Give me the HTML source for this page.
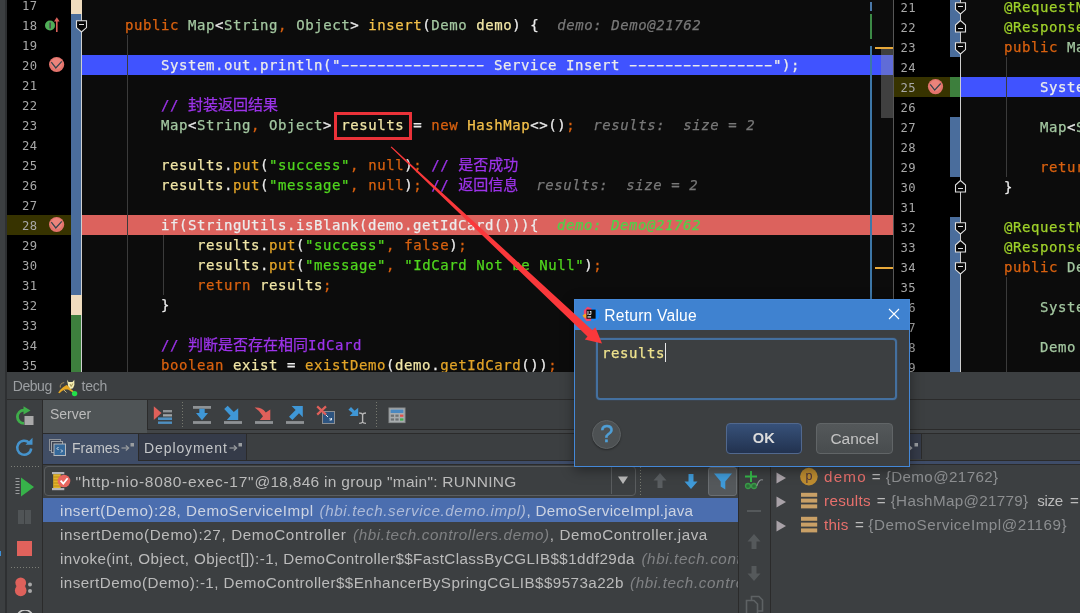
<!DOCTYPE html>
<html><head><meta charset="utf-8"><title>Debug</title>
<style>
*{box-sizing:border-box;margin:0;padding:0}
html,body{width:1080px;height:613px;overflow:hidden;background:#3c3f41}
body{position:relative;font-family:"Liberation Sans","Noto Sans CJK SC",sans-serif}
.abs{position:absolute}
.ed{position:absolute;top:0;height:372px;overflow:hidden;background:#0c0c0c}
.code,.ln,.num{font-family:"DejaVu Sans Mono","Liberation Mono","Noto Sans CJK SC",monospace;font-size:14px;line-height:20px;white-space:pre;letter-spacing:0.572px}
.ln{position:absolute;height:20px;color:#ececec;-webkit-text-stroke:0.25px currentColor}
.num{position:absolute;height:20px;color:#a8a8a8;font-size:12.2px;letter-spacing:.45px}
.k{color:#d9610f}.t{color:#a3c7a0}.s{color:#50d61e}.c{color:#9d33ea}.m{color:#f3c04a}.p{color:#e3a428}.h{color:#787878;font-style:italic}.y{color:#f1e6a6}.a{color:#9fd12a}.hg{color:#4fd14a;font-style:italic}
.dash{display:inline-block;width:144px;letter-spacing:-3.286px;transform:translateX(-3.200px) scaleX(1.75);transform-origin:0 50%}
.cj{font-family:"Noto Sans CJK SC",sans-serif;font-size:15px;letter-spacing:0;line-height:0}
.ui{font-family:"Liberation Sans",sans-serif;color:#bbbbbb}
</style></head><body>
<div id="wrap" style="position:absolute;left:0;top:0;width:1080px;height:613px;overflow:hidden;will-change:transform">
<div class="ed" id="L" style="left:0;width:893px">
<div class="abs" style="left:0;top:0;width:7px;height:372px;background:#3c3f41"></div>
<div class="abs" style="left:5px;top:0;width:2px;height:372px;background:#2e3032"></div>
<div class="abs" style="left:7px;top:0;width:64px;height:372px;background:#000"></div>
<div class="abs" style="left:7px;top:215px;width:64px;height:20px;background:#373300"></div>
<div class="abs" style="left:71px;top:0;width:11px;height:14px;background:#f0dcbe"></div>
<div class="abs" style="left:71px;top:14px;width:10px;height:281px;background:#4a6d9c"></div>
<div class="abs" style="left:71px;top:295px;width:11px;height:20px;background:#f0dcbe"></div>
<div class="abs" style="left:71px;top:315px;width:10px;height:57px;background:#3d7f3d"></div>
<div class="abs" style="left:81px;top:14px;width:1px;height:281px;background:#cfcfcf"></div>
<div class="abs" style="left:81px;top:315px;width:1px;height:57px;background:#cfcfcf"></div>
<div class="abs" style="left:82px;top:55px;width:811px;height:20px;background:#4053ff"></div>
<div class="abs" style="left:82px;top:215px;width:811px;height:20px;background:#dc625d"></div>
<div class="abs" style="left:127px;top:35px;width:1px;height:337px;background:#3b3b3b"></div>
<div class="abs" style="left:163px;top:235px;width:1px;height:60px;background:#3b3b3b"></div>
<div class="num" style="left:22px;top:-4px">17</div>
<div class="num" style="left:22px;top:16px">18</div>
<div class="num" style="left:22px;top:36px">19</div>
<div class="num" style="left:22px;top:56px">20</div>
<div class="num" style="left:22px;top:76px">21</div>
<div class="num" style="left:22px;top:96px">22</div>
<div class="num" style="left:22px;top:116px">23</div>
<div class="num" style="left:22px;top:136px">24</div>
<div class="num" style="left:22px;top:156px">25</div>
<div class="num" style="left:22px;top:176px">26</div>
<div class="num" style="left:22px;top:196px">27</div>
<div class="num" style="left:22px;top:216px">28</div>
<div class="num" style="left:22px;top:236px">29</div>
<div class="num" style="left:22px;top:256px">30</div>
<div class="num" style="left:22px;top:276px">31</div>
<div class="num" style="left:22px;top:296px">32</div>
<div class="num" style="left:22px;top:316px">33</div>
<div class="num" style="left:22px;top:336px">34</div>
<div class="num" style="left:22px;top:356px">35</div>
<div class="ln" style="left:89px;top:15px">    <span class="k">public</span> <span class="t">Map</span>&lt;<span class="t">String</span><span class="k">,</span> <span class="t">Object</span>&gt; <span class="m">insert</span>(<span class="t">Demo</span> <span class="y">demo</span>) {  <span class="h">demo: Demo@21762</span></div>
<div class="ln" style="left:89px;top:55px">        System.out.println("<span class="dash">----------------</span> Service Insert <span class="dash">----------------</span>");</div>
<div class="ln" style="left:89px;top:95px">        <span class="c">// </span><span class="c cj">封装返回结果</span></div>
<div class="ln" style="left:89px;top:115px">        <span class="t">Map</span>&lt;<span class="t">String</span><span class="k">,</span> <span class="t">Object</span>&gt; <span class="y">results</span> = <span class="k">new</span> <span class="m">HashMap</span>&lt;&gt;()<span class="k">;</span>  <span class="h">results:  size = 2</span></div>
<div class="ln" style="left:89px;top:155px">        <span class="y">results</span>.<span class="p">put</span>(<span class="s">"success"</span><span class="k">,</span> <span class="k">null</span>)<span class="k">;</span> <span class="c">// </span><span class="c cj">是否成功</span></div>
<div class="ln" style="left:89px;top:175px">        <span class="y">results</span>.<span class="p">put</span>(<span class="s">"message"</span><span class="k">,</span> <span class="k">null</span>)<span class="k">;</span> <span class="c">// </span><span class="c cj">返回信息</span>  <span class="h">results:  size = 2</span></div>
<div class="ln" style="left:89px;top:215px">        if(StringUtils.isBlank(demo.getIdCard())){  <span class="hg">demo: Demo@21762</span></div>
<div class="ln" style="left:89px;top:235px">            <span class="y">results</span>.<span class="p">put</span>(<span class="s">"success"</span><span class="k">,</span> <span class="k">false</span>)<span class="k">;</span></div>
<div class="ln" style="left:89px;top:255px">            <span class="y">results</span>.<span class="p">put</span>(<span class="s">"message"</span><span class="k">,</span> <span class="s">"IdCard Not be Null"</span>)<span class="k">;</span></div>
<div class="ln" style="left:89px;top:275px">            <span class="k">return</span> <span class="y">results</span><span class="k">;</span></div>
<div class="ln" style="left:89px;top:295px">        }</div>
<div class="ln" style="left:89px;top:335px">        <span class="c">// </span><span class="c cj">判断是否存在相同</span><span class="c">IdCard</span></div>
<div class="ln" style="left:89px;top:355px">        <span class="k">boolean</span> <span class="y">exist</span> = <span class="p">existDemo</span>(<span class="y">demo</span>.<span class="p">getIdCard</span>())<span class="k">;</span></div>
<svg class="abs" style="left:48px;top:56px" width="18" height="18" viewBox="0 0 18 18"><g transform="translate(0.6 0.5)"><circle cx="8" cy="8" r="7.600" fill="#e4736c"/><circle cx="8" cy="7" r="5.600" fill="#ee8a82" opacity=".7"/><path d="M2.700 5.700 L7.200 11.500 L13.200 4.900" fill="none" stroke="#36434c" stroke-width="1.250"/></g></svg>
<svg class="abs" style="left:48px;top:216px" width="18" height="18" viewBox="0 0 18 18"><g transform="translate(0.6 0.5)"><circle cx="8" cy="8" r="7.600" fill="#e4736c"/><circle cx="8" cy="7" r="5.600" fill="#ee8a82" opacity=".7"/><path d="M2.700 5.700 L7.200 11.500 L13.200 4.900" fill="none" stroke="#36434c" stroke-width="1.250"/></g></svg>
<svg class="abs" style="left:44px;top:16px" width="18" height="18" viewBox="0 0 18 18"><circle cx="6" cy="9.5" r="5" fill="#4fae57"/><rect x="5.3" y="6.5" width="1.6" height="6" fill="#4a4a4a"/><path d="M12.8 16 V3" stroke="#d9615a" stroke-width="1.6" fill="none"/><path d="M10 5.5 L12.8 1.2 L15.6 5.5 Z" fill="#d9615a"/></svg>
<svg class="abs" style="left:75px;top:19px" width="13" height="15" viewBox="0 0 13 15"><path d="M1.500 1.700 H11.500 V8.600 L6.500 13 L1.500 8.600 Z" fill="#060606" stroke="#dedede" stroke-width="1.100"/><path d="M4 5.500 H9" stroke="#dedede" stroke-width="1"/></svg>
<div class="abs" style="left:870px;top:2px;width:2px;height:9px;background:#4a78a8"></div>
<div class="abs" style="left:870px;top:14px;width:2px;height:25px;background:#3c8a46"></div>
<div class="abs" style="left:870px;top:46px;width:2px;height:326px;background:#3d77a8"></div>
<div class="abs" style="left:875px;top:47px;width:18px;height:2px;background:#e8a93a"></div>
<div class="abs" style="left:875px;top:267px;width:18px;height:2px;background:#e8a93a"></div>
<div class="abs" style="left:881px;top:49px;width:11.500px;height:69px;background:rgba(150,150,150,.38)"></div>
<div class="abs" style="left:334px;top:111.5px;width:78px;height:28px;border:3px solid #ea3239"></div>
</div>
<div class="ed" id="R" style="left:893px;width:187px">
<div class="abs" style="left:0;top:0;width:1px;height:372px;background:#555"></div>
<div class="abs" style="left:1px;top:0;width:66px;height:372px;background:#000"></div>
<div class="abs" style="left:1px;top:77px;width:56px;height:20px;background:#373300"></div>
<div class="abs" style="left:57px;top:0px;width:10px;height:57px;background:#4a6d9c"></div>
<div class="abs" style="left:57px;top:77px;width:10px;height:20px;background:#3d7f3d"></div>
<div class="abs" style="left:57px;top:117px;width:10px;height:60px;background:#4a6d9c"></div>
<div class="abs" style="left:57px;top:217px;width:10px;height:155px;background:#4a6d9c"></div>
<div class="abs" style="left:67px;top:0;width:1px;height:372px;background:#cfcfcf"></div>
<div class="abs" style="left:68px;top:77px;width:120px;height:20px;background:#4053ff"></div>
<div class="abs" style="left:113px;top:57px;width:1px;height:120px;background:#3b3b3b"></div>
<div class="abs" style="left:113px;top:277px;width:1px;height:95px;background:#3b3b3b"></div>
<div class="num" style="left:7.4px;top:-2px">21</div>
<div class="num" style="left:7.4px;top:18px">22</div>
<div class="num" style="left:7.4px;top:38px">23</div>
<div class="num" style="left:7.4px;top:58px">24</div>
<div class="num" style="left:7.4px;top:78px">25</div>
<div class="num" style="left:7.4px;top:98px">26</div>
<div class="num" style="left:7.4px;top:118px">27</div>
<div class="num" style="left:7.4px;top:138px">28</div>
<div class="num" style="left:7.4px;top:158px">29</div>
<div class="num" style="left:7.4px;top:178px">30</div>
<div class="num" style="left:7.4px;top:198px">31</div>
<div class="num" style="left:7.4px;top:218px">32</div>
<div class="num" style="left:7.4px;top:238px">33</div>
<div class="num" style="left:7.4px;top:258px">34</div>
<div class="num" style="left:7.4px;top:278px">35</div>
<div class="num" style="left:7.4px;top:298px">36</div>
<div class="num" style="left:7.4px;top:318px">37</div>
<div class="num" style="left:7.4px;top:338px">38</div>
<div class="num" style="left:7.4px;top:358px">39</div>
<div class="ln" style="left:75px;top:-3px">    <span class="a">@RequestMapping</span></div>
<div class="ln" style="left:75px;top:17px">    <span class="a">@ResponseBody</span></div>
<div class="ln" style="left:75px;top:37px">    <span class="k">public</span> <span class="t">Map</span>&lt;</div>
<div class="ln" style="left:75px;top:77px">        System.out.</div>
<div class="ln" style="left:75px;top:117px">        <span class="t">Map</span>&lt;<span class="t">String</span></div>
<div class="ln" style="left:75px;top:157px">        <span class="k">return</span> results</div>
<div class="ln" style="left:75px;top:177px">    }</div>
<div class="ln" style="left:75px;top:217px">    <span class="a">@RequestMapping</span></div>
<div class="ln" style="left:75px;top:237px">    <span class="a">@ResponseBody</span></div>
<div class="ln" style="left:75px;top:257px">    <span class="k">public</span> <span class="t">Demo</span> </div>
<div class="ln" style="left:75px;top:297px">        <span class="t">System</span>.out.</div>
<div class="ln" style="left:75px;top:337px">        <span class="t">Demo</span> </div>
<svg class="abs" style="left:34px;top:78px" width="18" height="18" viewBox="0 0 18 18"><g transform="translate(0.5 0.6)"><circle cx="8" cy="8" r="7.600" fill="#e4736c"/><circle cx="8" cy="7" r="5.600" fill="#ee8a82" opacity=".7"/><path d="M2.700 5.700 L7.200 11.500 L13.200 4.900" fill="none" stroke="#36434c" stroke-width="1.250"/></g></svg>
<svg class="abs" style="left:61px;top:1px" width="13" height="15" viewBox="0 0 13 15"><path d="M1.500 1.700 H11.500 V8.600 L6.500 13 L1.500 8.600 Z" fill="#060606" stroke="#dedede" stroke-width="1.100"/><path d="M4 5.500 H9" stroke="#dedede" stroke-width="1"/></svg>
<svg class="abs" style="left:61px;top:19px" width="13" height="15" viewBox="0 0 13 15"><path d="M1.500 13 H11.500 V6.100 L6.500 1.600 L1.500 6.100 Z" fill="#060606" stroke="#dedede" stroke-width="1.100"/><path d="M4 9.500 H9" stroke="#dedede" stroke-width="1"/></svg>
<svg class="abs" style="left:61px;top:41px" width="13" height="15" viewBox="0 0 13 15"><path d="M1.500 1.700 H11.500 V8.600 L6.500 13 L1.500 8.600 Z" fill="#060606" stroke="#dedede" stroke-width="1.100"/><path d="M4 5.500 H9" stroke="#dedede" stroke-width="1"/></svg>
<svg class="abs" style="left:61px;top:179px" width="13" height="15" viewBox="0 0 13 15"><path d="M1.500 13 H11.500 V6.100 L6.500 1.600 L1.500 6.100 Z" fill="#060606" stroke="#dedede" stroke-width="1.100"/><path d="M4 9.500 H9" stroke="#dedede" stroke-width="1"/></svg>
<svg class="abs" style="left:61px;top:221px" width="13" height="15" viewBox="0 0 13 15"><path d="M1.500 1.700 H11.500 V8.600 L6.500 13 L1.500 8.600 Z" fill="#060606" stroke="#dedede" stroke-width="1.100"/><path d="M4 5.500 H9" stroke="#dedede" stroke-width="1"/></svg>
<svg class="abs" style="left:61px;top:239px" width="13" height="15" viewBox="0 0 13 15"><path d="M1.500 13 H11.500 V6.100 L6.500 1.600 L1.500 6.100 Z" fill="#060606" stroke="#dedede" stroke-width="1.100"/><path d="M4 9.500 H9" stroke="#dedede" stroke-width="1"/></svg>
<svg class="abs" style="left:61px;top:261px" width="13" height="15" viewBox="0 0 13 15"><path d="M1.500 1.700 H11.500 V8.600 L6.500 13 L1.500 8.600 Z" fill="#060606" stroke="#dedede" stroke-width="1.100"/><path d="M4 5.500 H9" stroke="#dedede" stroke-width="1"/></svg>
</div>
<div class="abs" id="D" style="left:0;top:372px;width:1080px;height:241px;background:#3c3f41">
<div class="abs" style="left:0px;top:0px;width:5px;height:241px;background:#3c3f41;"></div>
<div class="abs" style="left:5px;top:0px;width:2px;height:241px;background:#2e3032;"></div>
<div class="abs" style="left:0px;top:179px;width:1px;height:5px;background:#3d8fd8;"></div>
<div class="abs" style="left:7px;top:27px;width:1073px;height:1px;background:#2b2b2b;"></div>
<div class="abs ui" style="left:12.8px;top:2.6px;height:22px;line-height:22px;font-size:14px;letter-spacing:-0.464px;color:#9c9fa2;font-style:normal;font-weight:normal;white-space:pre">Debug</div>
<div class="abs ui" style="left:81.6px;top:2.6px;height:22px;line-height:22px;font-size:14px;letter-spacing:-0.287px;color:#9c9fa2;font-style:normal;font-weight:normal;white-space:pre">tech</div>
<svg class="abs" style="left:57px;top:5px" width="22" height="22" viewBox="0 0 22 22"><path d="M1.200 15.800 L3 13 L6 10.200 L9.500 8 L11.300 9 L13.500 11.800 L17 14.500 L15.500 15.200 L11 12.600 L8 12.600 L5 14 L2.500 16.200 Z" fill="#e6a722"/><path d="M10 2.800 L11.600 5 L15.500 5 L17.300 2.800 L17.400 8 L16 11.200 L13.500 11.900 L11.200 9 Z" fill="#f5edb2"/><path d="M13 7 L14.200 9.500 L15.800 6.500" stroke="#8a7a3a" stroke-width=".8" fill="none"/><path d="M3.300 10.500 Q2.600 6.500 7.200 5.600" stroke="#a89060" stroke-width="1" fill="none"/><path d="M7 13 L9.500 15.600" stroke="#c8b880" stroke-width="1" fill="none"/><circle cx="17.600" cy="16.600" r="2.700" fill="#22e04a"/></svg>
<div class="abs" style="left:42px;top:28px;width:1px;height:213px;background:#2b2b2b;"></div>
<div class="abs" style="left:43px;top:28px;width:104px;height:34px;background:#4f5456;"></div>
<div class="abs ui" style="left:50px;top:31px;height:22px;line-height:22px;font-size:14px;color:#bbbbbb;white-space:pre;">Server</div>
<div class="abs" style="left:147px;top:28px;width:1px;height:30px;background:#2b2b2b;"></div>
<div class="abs" style="left:147px;top:57px;width:933px;height:1px;background:#2b2b2b;"></div>
<div class="abs" style="left:147px;top:58px;width:933px;height:3px;background:#424547;"></div>
<div class="abs" style="left:43px;top:62px;width:1037px;height:26px;background:#3c3f41;"></div>
<div class="abs" style="left:43px;top:62px;width:95px;height:27px;background:#414e65;"></div>
<div class="abs" style="left:138px;top:62px;width:109px;height:26px;background:#353b49;"></div>
<div class="abs" style="left:138px;top:62px;width:1px;height:26px;background:#2b2b2b;"></div>
<div class="abs" style="left:246px;top:62px;width:1px;height:26px;background:#2b2b2b;"></div>
<div class="abs" style="left:138px;top:88px;width:942px;height:1px;background:#2b2b2b;"></div>
<div class="abs" style="left:43px;top:89px;width:1037px;height:3px;background:#3e4c68;"></div>
<div class="abs" style="left:43px;top:88px;width:95px;height:1px;background:#3f4c66;"></div>
<div class="abs" style="left:43px;top:61px;width:1037px;height:1px;background:#2b2b2b;"></div>
<div class="abs" style="left:43px;top:92px;width:1037px;height:1px;background:#2b2b2b;"></div>
<div class="abs ui" style="left:72px;top:65px;height:22px;line-height:22px;font-size:14px;color:#c4c6c8;white-space:pre;letter-spacing:.05px">Frames</div>
<div class="abs ui" style="left:144px;top:65px;height:22px;line-height:22px;font-size:14px;color:#c4c6c8;white-space:pre;letter-spacing:.9px">Deployment</div>
<svg class="abs" style="left:121px;top:69px" width="14" height="12" viewBox="0 0 14 12"><path d="M0.5 7 H7" stroke="#9a9da0" stroke-width="1.2"/><path d="M4.8 4.5 L7.6 7 L4.8 9.5" fill="none" stroke="#9a9da0" stroke-width="1.2"/><rect x="9.5" y="2" width="3.5" height="3.5" fill="#9a9da0"/></svg>
<svg class="abs" style="left:229px;top:69px" width="14" height="12" viewBox="0 0 14 12"><path d="M0.5 7 H7" stroke="#9a9da0" stroke-width="1.2"/><path d="M4.8 4.5 L7.6 7 L4.8 9.5" fill="none" stroke="#9a9da0" stroke-width="1.2"/><rect x="9.5" y="2" width="3.5" height="3.5" fill="#9a9da0"/></svg>
<svg class="abs" style="left:48px;top:66px" width="20" height="20" viewBox="0 0 20 20"><rect x="1.5" y="1.5" width="11" height="11" fill="#3c4454" stroke="#8c9096"/><rect x="3.5" y="3.5" width="11" height="11" fill="#3c4454" stroke="#a0a4a8"/><rect x="6" y="6" width="11.5" height="11.5" fill="#35699a" stroke="#b4b8bc"/><path d="M10.5 9 L9 10.5 L10.5 12 M13 11.5 L14.5 13 L13 14.5" stroke="#dfe6ee" stroke-width="1" fill="none"/></svg>
<div class="abs" style="left:909px;top:62px;width:12px;height:25px;background:#353b49;"></div>
<div class="abs" style="left:921px;top:62px;width:1px;height:25px;background:#2b2b2b;"></div>
<svg class="abs" style="left:905px;top:69px" width="14" height="12" viewBox="0 0 14 12"><path d="M4.8 4.5 L7.6 7 L4.8 9.5 Z" fill="#9a9da0"/><rect x="9.5" y="2" width="3.5" height="3.5" fill="#9a9da0"/></svg>
<div class="abs" style="left:44px;top:94.3px;width:592px;height:30px;border:1px solid #5a5d5f;border-radius:4px;background:#3c3f41"></div>
<div class="abs" style="left:611px;top:95px;width:1px;height:27px;background:#5a5d5f;"></div>
<svg class="abs" style="left:617px;top:103px" width="12" height="10" viewBox="0 0 12 10"><path d="M1 1.5 H11 L6 9 Z" fill="#b8b8b8"/></svg>
<div class="abs ui" style="left:75.5px;top:98.6px;height:22px;line-height:22px;font-size:15.5px;letter-spacing:0.698px;color:#bbbbbb;font-style:normal;font-weight:normal;white-space:pre">&quot;http-nio-8080-exec-17&quot;</div>
<div class="abs ui" style="left:254.4px;top:98.6px;height:22px;line-height:22px;font-size:15.5px;letter-spacing:0.280px;color:#bbbbbb;font-style:normal;font-weight:normal;white-space:pre">@18,846 in group &quot;main&quot;: RUNNING</div>
<svg class="abs" style="left:51px;top:99px" width="22" height="20" viewBox="0 0 22 20"><rect x="1" y="1" width="12.300" height="2.200" fill="#b4b4b8"/><rect x="1" y="17" width="12.300" height="2.200" fill="#b4b4b8"/><rect x="2.200" y="3.200" width="7.500" height="13.800" fill="#e3b32c"/><path d="M2.200 6 H9.700 M2.200 9 H9.700 M2.200 12 H9.700 M2.200 15 H9.700" stroke="#b88a18" stroke-width="1"/><circle cx="13" cy="10" r="6.300" fill="#e8665f"/><path d="M9.600 9.600 L12.300 12.600 L16.600 7.200" fill="none" stroke="#fff" stroke-width="1.700"/></svg>
<div class="abs" style="left:640px;top:95px;width:1px;height:28px;background:repeating-linear-gradient(to bottom,#77796f 0 1px,transparent 1px 3px)"></div>
<svg class="abs" style="left:652px;top:100px" width="16" height="18" viewBox="0 0 16 18"><path d="M8 1 L14.5 8.5 H10.5 V16 H5.5 V8.5 H1.5 Z" fill="#5a5e61"/></svg>
<svg class="abs" style="left:683px;top:100px" width="16" height="18" viewBox="0 0 16 18"><path d="M8 17 L14.5 9.5 H10.5 V2 H5.5 V9.5 H1.5 Z" fill="#3f9ad8"/></svg>
<div class="abs" style="left:708px;top:95px;width:29px;height:29px;border:1px solid #6a6e71;border-radius:3px;background:#54585b"></div>
<svg class="abs" style="left:713px;top:100px" width="20" height="19" viewBox="0 0 20 19"><path d="M1 1.5 H19 L12.3 9.5 V17.5 L7.7 14.5 V9.5 Z" fill="#3f9ad8"/></svg>
<div class="abs" style="left:43px;top:126px;width:695px;height:24px;background:#4b6eaf;"></div>
<div class="abs" style="left:43px;top:126px;width:695px;height:96px;overflow:hidden"><div class="abs ui" style="left:17px;top:0.7px;height:24px;line-height:24px;font-size:15.2px;letter-spacing:0.514px;color:#ccd3e2;font-style:normal;font-weight:normal;white-space:pre">insert(Demo):28, DemoServiceImpl</div><div class="abs ui" style="left:276.6px;top:0.7px;height:24px;line-height:24px;font-size:15.2px;letter-spacing:0.605px;color:#aebbd8;font-style:italic;font-weight:normal;white-space:pre">(hbi.tech.service.demo.impl)</div><div class="abs ui" style="left:483.5px;top:0.7px;height:24px;line-height:24px;font-size:15.2px;letter-spacing:0.295px;color:#ccd3e2;font-style:normal;font-weight:normal;white-space:pre">, DemoServiceImpl.java</div><div class="abs ui" style="left:17px;top:24.7px;height:24px;line-height:24px;font-size:15.2px;letter-spacing:0.635px;color:#bbbbbb;font-style:normal;font-weight:normal;white-space:pre">insertDemo(Demo):27, DemoController</div><div class="abs ui" style="left:310px;top:24.7px;height:24px;line-height:24px;font-size:15.2px;letter-spacing:0.629px;color:#808284;font-style:italic;font-weight:normal;white-space:pre">(hbi.tech.controllers.demo)</div><div class="abs ui" style="left:506.8px;top:24.7px;height:24px;line-height:24px;font-size:15.2px;letter-spacing:0.572px;color:#bbbbbb;font-style:normal;font-weight:normal;white-space:pre">, DemoController.java</div><div class="abs ui" style="left:17px;top:48.7px;height:24px;line-height:24px;font-size:15.2px;letter-spacing:0.411px;color:#bbbbbb;font-style:normal;font-weight:normal;white-space:pre">invoke(int, Object, Object[]):-1, DemoController$$FastClassByCGLIB$$1ddf29da</div><div class="abs ui" style="left:598.4px;top:48.7px;height:24px;line-height:24px;font-size:15.2px;letter-spacing:0.629px;color:#808284;font-style:italic;font-weight:normal;white-space:pre">(hbi.tech.controllers.demo)</div><div class="abs ui" style="left:17px;top:72.7px;height:24px;line-height:24px;font-size:15.2px;letter-spacing:0.434px;color:#bbbbbb;font-style:normal;font-weight:normal;white-space:pre">insertDemo(Demo):-1, DemoController$$EnhancerBySpringCGLIB$$9573a22b</div><div class="abs ui" style="left:587px;top:72.7px;height:24px;line-height:24px;font-size:15.2px;letter-spacing:0.629px;color:#808284;font-style:italic;font-weight:normal;white-space:pre">(hbi.tech.controllers.demo)</div></div>
<div class="abs" style="left:738px;top:92px;width:1px;height:149px;background:#2b2b2b;"></div>
<div class="abs" style="left:770px;top:92px;width:1px;height:149px;background:#2b2b2b;"></div>
<svg class="abs" style="left:14px;top:33px" width="22" height="22" viewBox="0 0 22 22"><path d="M10 5.200 A6.600 6.600 0 1 0 10 18.400" fill="none" stroke="#3fae4a" stroke-width="2.800"/><path d="M9.500 1.200 L16.500 5.400 L9.500 9.600 Z" fill="#3fae4a"/><rect x="10.500" y="11" width="9" height="9" fill="#a9a9a9"/></svg>
<svg class="abs" style="left:14px;top:64px" width="22" height="22" viewBox="0 0 22 22"><path d="M15.200 6.800 A7 7 0 1 0 17.200 12.500" fill="none" stroke="#4593cc" stroke-width="2.500"/><path d="M11.500 8.800 L18.500 1.800 L18.500 8.800 Z" fill="#4593cc"/></svg>
<div class="abs" style="left:11px;top:94px;width:29px;height:1px;background:repeating-linear-gradient(to right,#7d7f78 0 1px,transparent 1px 3px)"></div>
<svg class="abs" style="left:14px;top:104px" width="22" height="22" viewBox="0 0 22 22"><path d="M7 1.5 L20 11 L7 20.5 Z" fill="#37b24a"/><path d="M1.500 2.500 H5.500 M1.500 5.500 H5.500 M1.500 8.500 H5.500 M1.500 11.500 H5.500 M1.500 14.500 H5.500 M1.500 17.500 H5.500" stroke="#9a9c9e" stroke-width="1"/></svg>
<div class="abs" style="left:18px;top:137.5px;width:5.5px;height:14.5px;background:#505456;"></div>
<div class="abs" style="left:25px;top:137.5px;width:5.5px;height:14.5px;background:#505456;"></div>
<div class="abs" style="left:16.5px;top:168.8px;width:15.2px;height:15px;background:#e0625c;"></div>
<div class="abs" style="left:11px;top:195px;width:29px;height:1px;background:repeating-linear-gradient(to right,#7d7f78 0 1px,transparent 1px 3px)"></div>
<svg class="abs" style="left:13px;top:204px" width="22" height="22" viewBox="0 0 22 22"><circle cx="7.700" cy="6.800" r="5.400" fill="#de615b"/><circle cx="7.700" cy="14.400" r="5.800" fill="#de615b"/><circle cx="17" cy="8.500" r="2" fill="#a8a8a8"/><circle cx="17" cy="15" r="2" fill="#a8a8a8"/></svg>
<svg class="abs" style="left:14px;top:238px" width="22" height="8" viewBox="0 0 22 8"><path d="M3 8 A8 8 0 0 1 19 8" fill="none" stroke="#c8c8c8" stroke-width="1.6"/><path d="M6 8 A5 5 0 0 1 16 8 Z" fill="#dc5a55"/></svg>
<svg class="abs" style="left:0;top:0" width="1080" height="241" viewBox="0 372 1080 241"><path d="M153.800 406.200 L161.500 413.100 L153.800 420 Z" fill="#e0605a"/><rect x="163" y="410" width="9" height="2.400" fill="#8e9295"/><rect x="163" y="414.200" width="9" height="2.300" fill="#a0a4a6"/><rect x="158" y="417.400" width="14" height="2.600" fill="#4f8fc0"/><rect x="158" y="421.500" width="14" height="2.400" fill="#4f8fc0"/><rect x="193" y="406" width="18" height="2.800" fill="#8e9295"/><rect x="193" y="421.100" width="18" height="2.800" fill="#8e9295"/><path d="M199.300 408.800 H204.700 V413 H208 L202 420.300 L196 413 H199.300 Z" fill="#3f97d6"/><rect x="224" y="421.100" width="18" height="2.800" fill="#8e9295"/><path d="M224.200 408.900 L227.700 405.700 L233.800 412.100 L238.200 408.300 V420 H226.800 L230.600 415.700 Z" fill="#3f97d6"/><rect x="255" y="421.100" width="18" height="2.800" fill="#8e9295"/><path d="M254.600 407.600 Q262 407 265.800 412.600 L270.300 409.500 V420 H259.800 L263 416.200 Q260 411 254.600 407.600 Z" fill="#e0605a"/><rect x="286" y="421.100" width="18" height="2.800" fill="#8e9295"/><path d="M291.600 406 H302.800 V417.200 L299 413.300 L292.400 420 L289 416.800 L295.600 410 Z" fill="#3f97d6"/><rect x="322.500" y="411.500" width="12" height="12" fill="#2d5480" stroke="#8c8f92" stroke-width="1"/><path d="M326 415 L328 417 M329.500 418 L331.500 420 M331.500 418 V420 H329.500" stroke="#dfe6ee" stroke-width="1" fill="none"/><path d="M317.200 406.400 L326 414.600 M326 406.400 L317.200 414.600" stroke="#e0605a" stroke-width="2.200"/><path d="M348.400 409.800 L351 407 L354.600 410.800 L358.200 407.800 V416 H349.600 L352.600 413 Z" fill="#3f97d6"/><path d="M359.200 413 Q362 413 362.600 414.500 Q363.200 413 366 413 M359.200 423.400 Q362 423.400 362.600 422 Q363.200 423.400 366 423.400 M362.600 414.500 V422" stroke="#b8b8b8" stroke-width="1.400" fill="none"/><rect x="389" y="408" width="16" height="14.600" fill="#a8acae" stroke="#8a8e90" stroke-width="1"/><rect x="390.600" y="409.600" width="12.800" height="3.400" fill="#4a88c0"/><rect x="390.800" y="414.600" width="3.200" height="2.200" fill="#6e7274"/><rect x="395.400" y="414.600" width="3.200" height="2.200" fill="#6e7274"/><rect x="400" y="414.600" width="3.400" height="2.200" fill="#e0504a"/><rect x="390.800" y="418.400" width="3.200" height="2.200" fill="#6e7274"/><rect x="395.400" y="418.400" width="3.200" height="2.200" fill="#6e7274"/><rect x="400" y="418.400" width="3.400" height="2.200" fill="#3fae4a"/></svg>
<div class="abs" style="left:182px;top:30px;width:1px;height:26px;background:repeating-linear-gradient(to bottom,#77796f 0 1px,transparent 1px 3px)"></div>
<div class="abs" style="left:376px;top:30px;width:1px;height:26px;background:repeating-linear-gradient(to bottom,#77796f 0 1px,transparent 1px 3px)"></div>
<svg class="abs" style="left:744px;top:97px" width="22" height="22" viewBox="0 0 22 22"><path d="M7 2 V13 M1 7.500 H13" stroke="#35b84a" stroke-width="2"/><circle cx="4" cy="17" r="2.500" fill="#2c6e38" stroke="#3a9a48" stroke-width="1.300"/><circle cx="10" cy="17" r="2.500" fill="#2c6e38" stroke="#3a9a48" stroke-width="1.300"/><path d="M12.800 17 Q15 9.500 19 11" stroke="#8a8d90" stroke-width="1.100" fill="none"/></svg>
<div class="abs" style="left:747px;top:138px;width:14px;height:2px;background:#55595b;"></div>
<svg class="abs" style="left:746px;top:161px" width="16" height="18" viewBox="0 0 16 18"><path d="M8 1 L14.5 8.5 H10.5 V16 H5.5 V8.5 H1.5 Z" fill="#55595b"/></svg>
<svg class="abs" style="left:746px;top:192px" width="16" height="18" viewBox="0 0 16 18"><path d="M8 17 L14.5 9.5 H10.5 V2 H5.5 V9.5 H1.5 Z" fill="#55595b"/></svg>
<svg class="abs" style="left:745px;top:223px" width="20" height="20" viewBox="0 0 20 20"><path d="M6.5 1.5 H14 L17.5 5 V16 H6.5 Z" fill="none" stroke="#5e6264" stroke-width="1.6"/><path d="M1.5 5.500 H9 L12.500 9 V20 H1.500 Z" fill="#3c3f41" stroke="#5e6264" stroke-width="1.6"/></svg>
<svg class="abs" style="left:776px;top:99.7px" width="11" height="12" viewBox="0 0 11 12"><path d="M0.500 0.500 L10 6 L0.500 11.500 Z" fill="#a9a2a8"/></svg>
<svg class="abs" style="left:800px;top:95.4px" width="18" height="20" viewBox="0 0 18 20"><circle cx="8.900" cy="9.600" r="8.800" fill="#bd8c30"/><text x="9" y="13.400" font-family="Liberation Sans, sans-serif" font-size="12.500" fill="#47303c" text-anchor="middle">p</text></svg>
<div class="abs ui" style="left:824px;top:93.4px;height:24px;line-height:24px;font-size:15.2px;letter-spacing:1.225px;color:#e8706c;font-style:normal;font-weight:normal;white-space:pre">demo</div>
<div class="abs ui" style="left:871.7px;top:93.4px;height:24px;line-height:24px;font-size:15.2px;letter-spacing:-1.278px;color:#bbbbbb;font-style:normal;font-weight:normal;white-space:pre">=</div>
<div class="abs ui" style="left:885.7px;top:93.4px;height:24px;line-height:24px;font-size:15.2px;letter-spacing:0.382px;color:#8c8e90;font-style:normal;font-weight:normal;white-space:pre">{Demo@21762}</div>
<svg class="abs" style="left:776px;top:123.7px" width="11" height="12" viewBox="0 0 11 12"><path d="M0.500 0.500 L10 6 L0.500 11.500 Z" fill="#a9a2a8"/></svg>
<svg class="abs" style="left:801px;top:120.4px" width="17" height="18" viewBox="0 0 17 18"><rect x="0" y="0.800" width="16.200" height="4" fill="#c9a066"/><rect x="0" y="6.600" width="16.200" height="4" fill="#c9a066"/><rect x="0" y="12.400" width="16.200" height="4" fill="#c9a066"/></svg>
<div class="abs ui" style="left:824px;top:117.4px;height:24px;line-height:24px;font-size:15.2px;letter-spacing:0.322px;color:#e8706c;font-style:normal;font-weight:normal;white-space:pre">results</div>
<div class="abs ui" style="left:876.7px;top:117.4px;height:24px;line-height:24px;font-size:15.2px;letter-spacing:-1.278px;color:#bbbbbb;font-style:normal;font-weight:normal;white-space:pre">=</div>
<div class="abs ui" style="left:890.7px;top:117.4px;height:24px;line-height:24px;font-size:15.2px;letter-spacing:0.335px;color:#8c8e90;font-style:normal;font-weight:normal;white-space:pre">{HashMap@21779}</div>
<div class="abs ui" style="left:1037.3px;top:117.4px;height:24px;line-height:24px;font-size:15.2px;letter-spacing:-0.344px;color:#bbbbbb;font-style:normal;font-weight:normal;white-space:pre">size</div>
<div class="abs ui" style="left:1070px;top:117.4px;height:24px;line-height:24px;font-size:15.2px;letter-spacing:-1.178px;color:#bbbbbb;font-style:normal;font-weight:normal;white-space:pre">=</div>
<div class="abs ui" style="left:1084px;top:117.4px;height:24px;line-height:24px;font-size:15.2px;letter-spacing:-0.455px;color:#bbbbbb;font-style:normal;font-weight:normal;white-space:pre">2</div>
<svg class="abs" style="left:776px;top:147.7px" width="11" height="12" viewBox="0 0 11 12"><path d="M0.500 0.500 L10 6 L0.500 11.500 Z" fill="#a9a2a8"/></svg>
<svg class="abs" style="left:801px;top:144.4px" width="17" height="18" viewBox="0 0 17 18"><rect x="0" y="0.800" width="16.200" height="4" fill="#c9a066"/><rect x="0" y="6.600" width="16.200" height="4" fill="#c9a066"/><rect x="0" y="12.400" width="16.200" height="4" fill="#c9a066"/></svg>
<div class="abs ui" style="left:824px;top:141.4px;height:24px;line-height:24px;font-size:15.2px;letter-spacing:0.215px;color:#e8706c;font-style:normal;font-weight:normal;white-space:pre">this</div>
<div class="abs ui" style="left:855px;top:141.4px;height:24px;line-height:24px;font-size:15.2px;letter-spacing:-1.178px;color:#bbbbbb;font-style:normal;font-weight:normal;white-space:pre">=</div>
<div class="abs ui" style="left:868.3px;top:141.4px;height:24px;line-height:24px;font-size:15.2px;letter-spacing:0.533px;color:#8c8e90;font-style:normal;font-weight:normal;white-space:pre">{DemoServiceImpl@21169}</div>
</div>
<div class="abs" id="dlg" style="left:574px;top:299px;width:336px;height:168px;background:#3c3f41;border:1px solid #4488d8;box-shadow:0 3px 12px rgba(0,0,0,.4)">
<div class="abs" style="left:0px;top:0px;width:334px;height:30px;background:#3f82d0;"></div>
<svg class="abs" style="left:7px;top:6px" width="18" height="18" viewBox="0 0 18 18"><circle cx="11.300" cy="8.500" r="6.200" fill="#1e8cff"/><path d="M1.800 4.500 L5.500 0.800 L9.500 2.500 L9 14.800 L4.500 15.300 L2 12 Z" fill="#f4456a"/><path d="M0.500 9.200 L4.500 7.200 L4.500 12 L1.800 11.600 Z" fill="#f5a623"/><rect x="4.500" y="3.600" width="9.100" height="9.100" fill="#0d0d0d"/><text x="5.300" y="8.800" font-family="Liberation Sans, sans-serif" font-weight="bold" font-size="5.200" fill="#fff">IJ</text><rect x="5.500" y="10.400" width="3.600" height="1.100" fill="#fff"/></svg>
<div class="abs ui" style="left:29.3px;top:0.5px;height:30px;line-height:30px;font-size:15.6px;letter-spacing:0.227px;color:#fff;white-space:pre">Return Value</div>
<svg class="abs" style="left:312px;top:7px" width="14" height="14" viewBox="0 0 14 14"><path d="M2 2 L12 12 M12 2 L2 12" stroke="#fff" stroke-width="1.100" fill="none"/></svg>
<div class="abs" style="left:21px;top:38px;width:300.500px;height:61.500px;border:2px solid #44709f;border-radius:4px;background:#3c3f41;box-shadow:0 0 0 1px rgba(60,100,150,.18)"></div>
<div class="abs code" style="left:27px;top:42.7px;height:20px;color:#efe38e;-webkit-text-stroke:.25px #efe38e">results</div>
<div class="abs" style="left:90px;top:42.5px;width:1px;height:19px;background:#e8e8e8;"></div>
<div class="abs" style="left:17px;top:120px;width:29px;height:29px;border-radius:50%;background:#4d5153;border:1px solid #5e6264;box-shadow:0 1px 2px rgba(0,0,0,.35)"></div>
<div class="abs ui" style="left:17.3px;top:120.3px;width:29px;height:29px;line-height:29px;text-align:center;font-size:23.500px;-webkit-text-stroke:.5px #4f9fd6;color:#4f9fd6">?</div>
<div class="abs ui" style="left:150.5px;top:123px;width:76.500px;height:31px;line-height:29px;text-align:center;border:1px solid #51688e;border-radius:4px;background:linear-gradient(#375179,#22324f);font-size:14.600px;font-weight:bold;color:#dcdcdc">OK</div>
<div class="abs ui" style="left:241px;top:123px;width:77px;height:31px;line-height:29px;text-align:center;border:1px solid #616567;border-radius:4px;background:linear-gradient(#54585a,#484c4e);font-size:15.500px;color:#c4c4c4">Cancel</div>
</div>
<svg class="abs" style="left:0;top:0" width="1080" height="613" viewBox="0 0 1080 613"><path d="M390.700 147.300 L391.500 146.500 L592.400 330.200 L595.400 327.200 L602 343.500 L584.800 339.400 L587.500 336.400 Z" fill="#fa383b"/></svg>
</div>
</body></html>
